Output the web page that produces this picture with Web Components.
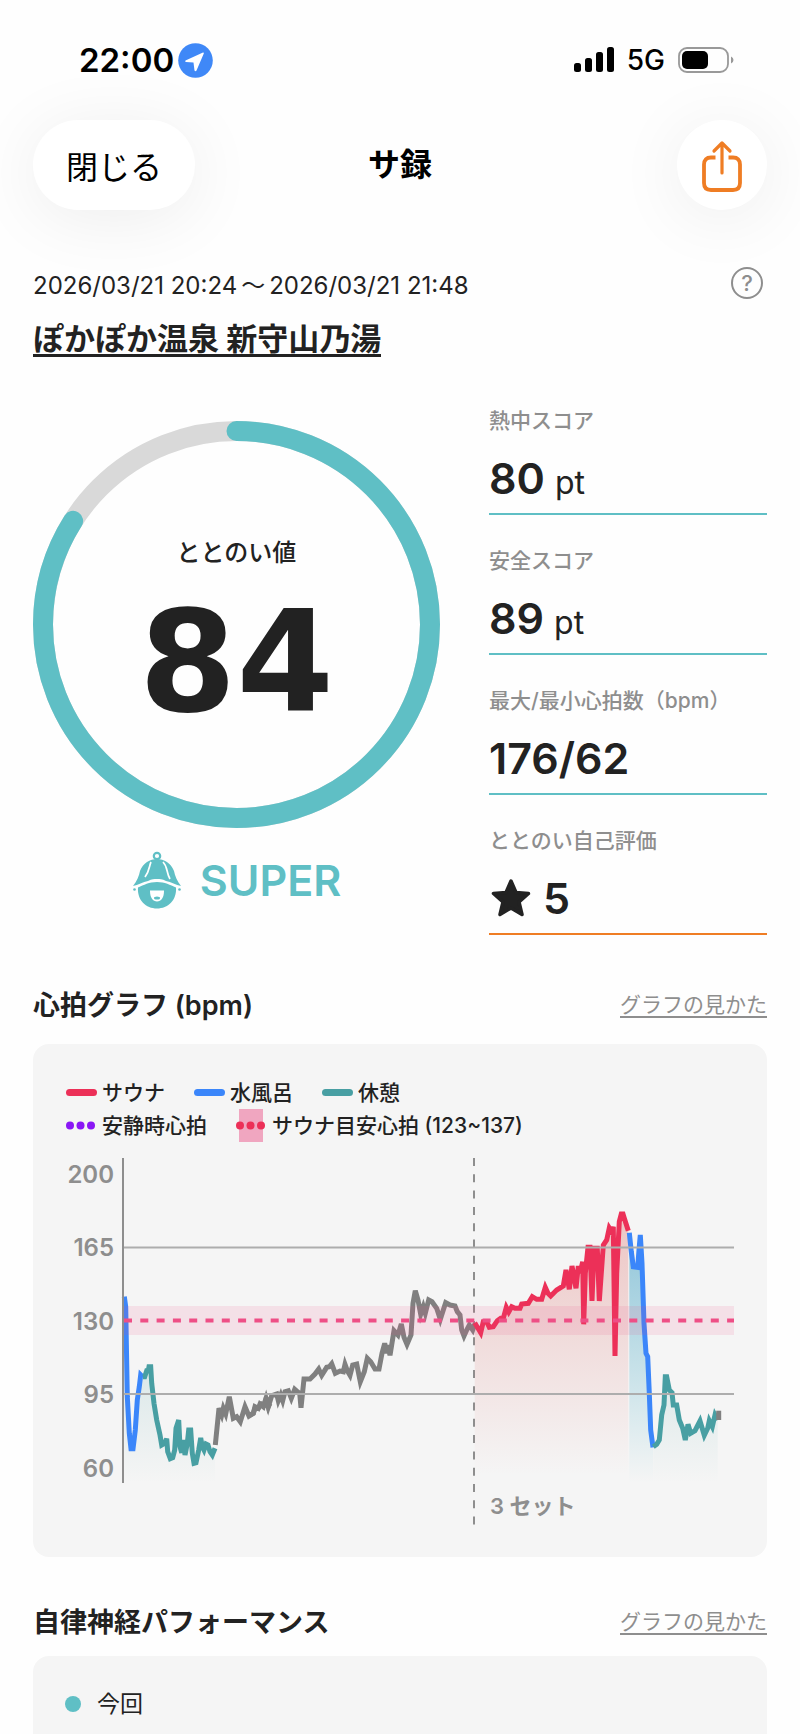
<!DOCTYPE html>
<html lang="ja">
<head>
<meta charset="utf-8">
<meta name="viewport" content="width=device-width, initial-scale=1">
<title>サ録</title>
<style>
    :root {
        --teal: #5fbfc5;
        --orange: #ef7d24;
        --ink: #222;
        --muted: #8e8e8e;
        --panel: #f5f5f5;
    }
    body {
        margin: 0;
        background: #fefefe;
        color: var(--ink);
        font-family: Inter, "Noto Sans CJK JP", sans-serif;
    }
</style>
</head>
<body>
<record-page></record-page>

<script>
class StatusBar extends HTMLElement {
    constructor() {
        super();
        this.shadow = this.attachShadow({ mode: 'open' });
    }

    connectedCallback() {
        this.shadow.innerHTML = /*html*/`
            <style>
                :host {
                    display: flex;
                    justify-content: space-between;
                    align-items: center;
                    height: 120px;
                    padding: 0 66px 0 79px;
                    color: #000;
                }
                div {
                    display: flex;
                    align-items: center;
                }
                .left { gap: 4px; }
                .right { gap: 13px; }
                .time {
                    font-size: 33px;
                    font-weight: 600;
                }
                .net {
                    font-size: 28px;
                    font-weight: 500;
                }
                svg { display: block; }
            </style>
            <div class="left">
                <span class="time">22:00</span>
                <svg width="35" height="35" viewBox="0 0 35 35">
                    <circle cx="17.500" cy="17.500" r="17.300" fill="#3f88f7"/>
                    <path d="M25 9.500 L7.500 17.500 Q6.500 18.500 8 19 L15.500 19.500 L16.500 27.500 Q17.500 29 18.500 27.500 L25.800 10.500 Q26 9.300 25 9.500Z" fill="#fff"/>
                </svg>
            </div>
            <div class="right">
                <svg width="40" height="26" viewBox="0 0 40 26">
                    <rect x="0" y="16" width="7" height="9" rx="2.500"/>
                    <rect x="11" y="11" width="7" height="14" rx="2.500"/>
                    <rect x="22" y="5" width="7" height="20" rx="2.500"/>
                    <rect x="33" y="0" width="7" height="25" rx="2.500"/>
                </svg>
                <span class="net">5G</span>
                <svg width="56" height="26" viewBox="0 0 56 26">
                    <rect x="1" y="1" width="49" height="24" rx="8" fill="none" stroke="#999" stroke-width="1.800"/>
                    <rect x="4" y="4" width="26" height="18" rx="5"/>
                    <path d="M53 9.500 Q55.500 10.500 55.500 13 Q55.500 15.500 53 16.500Z" fill="#999"/>
                </svg>
            </div>
        `;
    }
}

class NavBar extends HTMLElement {
    constructor() {
        super();
        this.shadow = this.attachShadow({ mode: 'open' });
    }

    connectedCallback() {
        this.shadow.innerHTML = /*html*/`
            <style>
                :host {
                    display: grid;
                    grid-template-columns: 1fr auto 1fr;
                    align-items: center;
                    color: #000;
                }
                button {
                    height: 90px;
                    padding: 0;
                    border: 0;
                    border-radius: 45px;
                    background: #fff;
                    color: #000;
                    font: inherit;
                    font-size: 32px;
                    box-shadow: 0 8px 70px rgba(0, 0, 0, 0.07);
                    cursor: pointer;
                }
                .close {
                    justify-self: start;
                    width: 162px;
                }
                .share {
                    display: flex;
                    align-items: center;
                    justify-content: center;
                    justify-self: end;
                    width: 90px;
                }
                h1 {
                    margin: 0;
                    font-size: 32px;
                    font-weight: 700;
                    line-height: 40px;
                }
            </style>
            <button class="close">閉じる</button>
            <h1><slot></slot></h1>
            <button class="share" aria-label="共有">
                <svg width="40" height="54" viewBox="0 -3 40 54" fill="none" stroke="#ef7d24" stroke-width="3.800" stroke-linecap="round" stroke-linejoin="round">
                    <path d="M13.500 16.500 H9 Q2 16.500 2 23.500 V42 Q2 49 9 49 H31 Q38 49 38 42 V23.500 Q38 16.500 31 16.500 H26.500" stroke-linecap="butt"/>
                    <path d="M20 32 V2 M12 10 L20 2 L28 10" stroke-width="3.200"/>
                </svg>
            </button>
        `;
    }
}

class SessionInfo extends HTMLElement {
    constructor() {
        super();
        this.shadow = this.attachShadow({ mode: 'open' });
    }

    connectedCallback() {
        this.shadow.innerHTML = /*html*/`
            <style>
                :host { display: block; }
                .row {
                    display: flex;
                    justify-content: space-between;
                    align-items: center;
                    height: 32px;
                    padding-right: 4px;
                    font-size: 24px;
                }
                button {
                    width: 32px;
                    height: 32px;
                    padding: 0;
                    border: 2px solid #8e8e8e;
                    border-radius: 50%;
                    background: none;
                    color: #8e8e8e;
                    font: inherit;
                    font-size: 22px;
                    font-weight: 500;
                    line-height: 28px;
                    cursor: pointer;
                }
                a {
                    display: block;
                    width: fit-content;
                    margin-top: 25px;
                    color: inherit;
                    font-size: 31px;
                    font-weight: 700;
                    line-height: 30px;
                    text-decoration: none;
                    border-bottom: 3px solid;
                }
            </style>
            <div class="row">
                <slot name="period"></slot>
                <button aria-label="ヘルプ">?</button>
            </div>
            <a href="#"><slot></slot></a>
        `;
    }
}

class ScoreRing extends HTMLElement {
    constructor() {
        super();
        this.shadow = this.attachShadow({ mode: 'open' });
    }

    connectedCallback() {
        const value = Number(this.getAttribute('value'));

        this.shadow.innerHTML = /*html*/`
            <style>
                :host {
                    display: block;
                    padding-top: 15px;
                }
                .ring {
                    display: grid;
                }
                .ring > * { grid-area: 1 / 1; }
                svg {
                    display: block;
                    width: 100%;
                }
                .text {
                    display: flex;
                    flex-direction: column;
                    align-items: center;
                    padding-top: 114px;
                }
                .label {
                    font-size: 24px;
                    font-weight: 500;
                    line-height: 36px;
                }
                .value {
                    margin-top: 12px;
                    font-family: "DejaVu Sans", sans-serif;
                    font-size: 140px;
                    font-weight: 700;
                    line-height: 160px;
                }
                .rank {
                    display: flex;
                    justify-content: center;
                    align-items: center;
                    gap: 18px;
                    height: 60px;
                    margin-top: 22px;
                    color: var(--teal);
                    font-size: 43px;
                    font-weight: 600;
                }
                .rank svg { width: 50px; }
            </style>
            <div class="ring">
                <svg viewBox="0 0 407 407" fill="none" stroke-width="20">
                    <circle cx="203.500" cy="203.500" r="193.500" stroke="#d9d9d9"/>
                    <circle cx="203.500" cy="203.500" r="193.500" stroke="#5fbfc5" stroke-linecap="round"
                        pathLength="100" stroke-dasharray="${value} 100" transform="rotate(-90 203.500 203.500)"/>
                </svg>
                <div class="text">
                    <span class="label">${this.getAttribute('label')}</span>
                    <span class="value">${value}</span>
                </div>
            </div>
            <div class="rank">
                <svg viewBox="0 0 50 58" fill="#5fbfc5">
                    <circle cx="25" cy="5" r="3.200" fill="none" stroke="#5fbfc5" stroke-width="2.200"/>
                    <path d="M1 35 C5 30 7 25 8 20 C11 12 18 8 25 8 C32 8 39 12 42 20 C43 25 45 30 49 35 C44 34 39 31 34 30 C30 28 28 28 25 28 C22 28 20 28 16 30 C11 31 6 34 1 35Z"/>
                    <path d="M19 11 C17 15 18 19 13 26 M31 11 C36 16 34 21 38 28" fill="none" stroke="#fff" stroke-width="1.700"/>
                    <path d="M6 36.500 C12 34 17 31 25 31 C33 31 38 34 44 36.500 C45 49 36 57.500 25 57.500 C14 57.500 5 49 6 36.500Z"/>
                    <circle cx="2.500" cy="38.500" r="1.300"/>
                    <circle cx="47.500" cy="38.500" r="1.300"/>
                    <path d="M18 39.500 H32 C32 47 29 50.500 25 50.500 C21 50.500 18 47 18 39.500Z" fill="#fff"/>
                    <ellipse cx="25" cy="47" rx="3" ry="1.500"/>
                </svg>
                <slot></slot>
            </div>
        `;
    }
}

class ScoreItem extends HTMLElement {
    constructor() {
        super();
        this.shadow = this.attachShadow({ mode: 'open' });
    }

    connectedCallback() {
        const unit = this.getAttribute('unit') || '';
        const star = this.hasAttribute('star') ? /*html*/`
            <svg width="44" height="42" viewBox="0 0 44 42">
                <path d="M22 4 L27 15.500 L39.500 16.500 L30 25 L33 37.500 L22 31 L11 37.500 L14 25 L4.500 16.500 L17 15.500Z" fill="#222" stroke="#222" stroke-width="3.500" stroke-linejoin="round"/>
            </svg>` : '';

        this.shadow.innerHTML = /*html*/`
            <style>
                :host {
                    display: block;
                    border-bottom: 2px solid var(--line, var(--teal));
                }
                .label {
                    color: var(--muted);
                    font-size: 21px;
                    font-weight: 500;
                    line-height: 30px;
                    white-space: nowrap;
                }
                .value {
                    display: flex;
                    align-items: baseline;
                    gap: 10px;
                    padding: 12px 0 5px;
                    font-size: 43px;
                    font-weight: 600;
                    line-height: 60px;
                }
                .unit {
                    font-size: 32px;
                    font-weight: 400;
                    line-height: 40px;
                }
                svg { align-self: center; }
            </style>
            <div class="label">${this.getAttribute('label')}</div>
            <div class="value">${star}<slot></slot>${unit && `<span class="unit">${unit}</span>`}</div>
        `;
    }
}

class SectionHead extends HTMLElement {
    constructor() {
        super();
        this.shadow = this.attachShadow({ mode: 'open' });
    }

    connectedCallback() {
        this.shadow.innerHTML = /*html*/`
            <style>
                :host {
                    display: flex;
                    justify-content: space-between;
                    align-items: center;
                    height: 40px;
                }
                h2 {
                    margin: 0;
                    font-size: 27px;
                    font-weight: 600;
                    line-height: 40px;
                }
                a {
                    color: var(--muted);
                    font-size: 21px;
                    line-height: 22px;
                    text-decoration: none;
                    border-bottom: 2px solid;
                }
            </style>
            <h2><slot></slot></h2>
            <a href="#">グラフの見かた</a>
        `;
    }
}

class ChartLegend extends HTMLElement {
    constructor() {
        super();
        this.shadow = this.attachShadow({ mode: 'open' });
    }

    dots(color, band) {
        const back = band ? '<rect x="3" y="0" width="24" height="33" fill="#f0a6c0"/>' : '';
        return /*html*/`
            <svg width="31" height="33" viewBox="0 0 31 33">${back}
                <g fill="${color}">
                    <circle cx="4" cy="16.500" r="4"/>
                    <circle cx="14.500" cy="16.500" r="4"/>
                    <circle cx="25" cy="16.500" r="4"/>
                </g>
            </svg>`;
    }

    bar(color) {
        return /*html*/`
            <svg width="31" height="33" viewBox="0 0 31 33">
                <rect y="13" width="31" height="7" rx="3.500" fill="${color}"/>
            </svg>`;
    }

    connectedCallback() {
        this.shadow.innerHTML = /*html*/`
            <style>
                :host {
                    display: block;
                    padding: 0 33px;
                    font-size: 21px;
                    font-weight: 500;
                    line-height: 30px;
                }
                div {
                    display: flex;
                    gap: 29px;
                }
                span {
                    display: flex;
                    align-items: center;
                    gap: 5px;
                    height: 33px;
                    white-space: nowrap;
                }
            </style>
            <div>
                <span>${this.bar('#ec3058')}サウナ</span>
                <span>${this.bar('#3b86fa')}水風呂</span>
                <span>${this.bar('#489fa3')}休憩</span>
            </div>
            <div>
                <span>${this.dots('#8a17f5')}安静時心拍</span>
                <span>${this.dots('#ec3058', true)}サウナ目安心拍 (123~137)</span>
            </div>
        `;
    }
}

// Points are in thirds of a pixel, counted from the origin of their segment
const SEGMENTS = [
    { color: '#3b86fa', fill: 'rest', x: 17, y: 0, points: '223,440 227,470 232,740 238,850 243,896 249,896 256,840 262,750 268,710 272,675 279,682' },
    { color: '#489fa3', fill: 'rest', x: 17, y: 0, points: '279,680 284,680 290,662 295,662 297,650 302,650 305,700 312,760 320,810 330,855 335,885 344,880 350,866 353,905 361,926 368,923 374,900 378,835 386,810 390,890 395,908 400,870 405,915 412,880 416,840 422,840 427,910 432,940 438,938 446,900 452,864 457,890 462,900 468,882 474,885 480,905 487,915 495,895' },
    { color: '#808080', x: 17, y: 0, points: '496,885 507,775 515,795 520,775 527,792 538,740 550,805 560,800 571,815 585,770 597,798 610,790 616,772 625,775 635,762 645,765 649,743 655,770 660,760' },
    { color: '#808080', x: 217, y: 100, points: '0,495 10,490 15,470 25,475 30,462 40,470 48,445 55,470 65,437 80,432 85,452 92,435 98,452 105,425 115,422 124,445 134,418 142,425 149,430 153,473 162,387 180,387 195,372 206,357 215,376 230,352 238,350 245,341 256,370 270,363 280,365 285,343 292,362 300,376 308,345 320,342 331,395 343,365 352,325 362,335 375,357 387,357 396,310 404,280 410,310 413,285 420,316 432,242 444,255 454,222 462,262 471,283 483,255 489,160 496,122 504,150 512,193 520,170 526,190 536,150 546,155 560,175 571,208 580,180 587,158 600,165 615,168 622,185 630,195 635,240 642,258 650,240 658,225 668,240 674,222' },
    { color: '#ec3058', fill: 'sauna', x: 427, y: 40, points: '44,398 62,428 70,395 80,395 88,412 100,410 112,392 122,385 130,385 139,352 146,366 155,350 165,355 180,355 185,342 205,340 217,320 230,328 245,328 256,292 264,310 272,318 290,300 310,288 318,240 328,298 336,228 348,295 355,228 360,250 368,215 371,403 376,250 384,172 390,172 396,333 402,175 412,175 418,333 430,165 440,150 448,114 455,125 460,110 465,498 470,250 478,95 484,72 489,72 493,85 505,122' },
    { color: '#3b86fa', fill: 'water', x: 427, y: 40, points: '508,128 514,185 520,230 533,232 537,180 541,135 546,220 552,400 558,490 563,500 568,610 572,720 579,772' },
    { color: '#489fa3', fill: 'rest', x: 427, y: 40, points: '580,770 590,763 598,750 605,675 612,645 616,560 620,560 628,600 636,608 640,645 650,645 658,690 668,715 676,750 684,703 692,730 705,722 720,693 733,736 743,715 748,692 757,710 765,675 773,690' },
    { color: '#808080', x: 427, y: 40, points: '776,662 776,690' }
];

class HeartChart extends HTMLElement {
    constructor() {
        super();
        this.shadow = this.attachShadow({ mode: 'open' });
    }

    segment({ color, fill, x, y, points }) {
        const list = points.split(' ').map(p => {
            const [px, py] = p.split(',').map(Number);
            return [(px / 3 + x).toFixed(1), (py / 3 + y).toFixed(1)];
        });
        const line = list.map(p => p.join(',')).join(' ');
        const area = fill
            ? `<polygon points="${list[0][0]},333 ${line} ${list[list.length - 1][0]},333" fill="url(#${fill})"/>`
            : '';
        return `${area}<polyline points="${line}" fill="none" stroke="${color}" stroke-width="5"/>`;
    }

    connectedCallback() {
        const ticks = [200, 165, 130, 95, 60].map((n, i) =>
            `<text x="81" y="${Math.round(33 + i * 73.4)}" text-anchor="end">${n}</text>`).join('');

        this.shadow.innerHTML = /*html*/`
            <style>
                :host {
                    display: block;
                    margin-top: 8px;
                }
                svg {
                    display: block;
                    width: 100%;
                }
                text {
                    fill: var(--muted);
                    font-size: 24px;
                    font-weight: 600;
                }
                .set { font-size: 22px; }
            </style>
            <svg viewBox="0 0 734 390">
                <defs>
                    <linearGradient id="sauna" gradientUnits="userSpaceOnUse" x1="0" y1="60" x2="0" y2="325">
                        <stop offset="0" stop-color="#d9534f" stop-opacity="0.300"/>
                        <stop offset="1" stop-color="#d9534f" stop-opacity="0"/>
                    </linearGradient>
                    <linearGradient id="water" gradientUnits="userSpaceOnUse" x1="0" y1="80" x2="0" y2="333">
                        <stop offset="0" stop-color="#4ba3c7" stop-opacity="0.600"/>
                        <stop offset="1" stop-color="#4bb3c7" stop-opacity="0"/>
                    </linearGradient>
                    <linearGradient id="rest" gradientUnits="userSpaceOnUse" x1="0" y1="210" x2="0" y2="333">
                        <stop offset="0" stop-color="#489fa3" stop-opacity="0.160"/>
                        <stop offset="1" stop-color="#489fa3" stop-opacity="0"/>
                    </linearGradient>
                </defs>
                ${ticks}
                <path d="M441 8 V375" stroke="#8e8e8e" stroke-width="2" stroke-dasharray="8 8.300"/>
                ${SEGMENTS.map(s => this.segment(s)).join('')}
                <path d="M91 97.500 H701 M91 244 H701" stroke="#adadad" stroke-width="2"/>
                <rect x="91" y="156" width="610" height="29" fill="#f04a86" fill-opacity="0.120"/>
                <path d="M91 170.500 H701" stroke="#ee4f86" stroke-width="4" stroke-dasharray="8 8.300"/>
                <path d="M90 8 V333" stroke="#8e8e8e" stroke-width="2"/>
                <text class="set" x="457" y="364">3 セット</text>
            </svg>
        `;
    }
}

class PanelCard extends HTMLElement {
    constructor() {
        super();
        this.shadow = this.attachShadow({ mode: 'open' });
    }

    connectedCallback() {
        this.shadow.innerHTML = /*html*/`
            <style>
                :host {
                    display: block;
                    padding: 32px 0 17px;
                    border-radius: 16px;
                    background: var(--panel);
                }
            </style>
            <slot></slot>
        `;
    }
}

class RecordPage extends HTMLElement {
    constructor() {
        super();
        this.shadow = this.attachShadow({ mode: 'open' });
    }

    connectedCallback() {
        this.shadow.innerHTML = /*html*/`
            <style>
                :host {
                    display: flex;
                    flex-direction: column;
                    min-height: 100vh;
                }
                main {
                    display: flex;
                    flex-direction: column;
                    flex: 1;
                    padding: 0 33px;
                }
                session-info { margin-top: 57px; }
                .to { margin: 0 4px; }
                .overview {
                    display: grid;
                    grid-template-columns: 407fr 278fr;
                    gap: 49px;
                    margin-top: 49px;
                }
                .scores {
                    display: flex;
                    flex-direction: column;
                    gap: 31px;
                }
                .self { --line: var(--orange); }
                section {
                    margin-top: 51px;
                }
                section panel-card { margin-top: 18px; }
                .nerve {
                    display: flex;
                    flex-direction: column;
                    flex: 1;
                    margin-top: 46px;
                }
                .nerve panel-card {
                    flex: 1;
                    margin-top: 13px;
                    padding-bottom: 0;
                    border-radius: 16px 16px 0 0;
                }
                .now {
                    display: flex;
                    align-items: center;
                    gap: 16px;
                    padding: 0 32px;
                    font-size: 23px;
                    line-height: 32px;
                }
                .now::before {
                    content: "";
                    width: 16px;
                    height: 16px;
                    border-radius: 50%;
                    background: var(--teal);
                }
            </style>
            <status-bar></status-bar>
            <main>
                <nav-bar>サ録</nav-bar>
                <session-info>
                    <span slot="period">2026/03/21 20:24<span class="to">〜</span>2026/03/21 21:48</span>
                    ぽかぽか温泉 新守山乃湯
                </session-info>
                <div class="overview">
                    <score-ring label="ととのい値" value="84">SUPER</score-ring>
                    <div class="scores">
                        <score-item label="熱中スコア" unit="pt">80</score-item>
                        <score-item label="安全スコア" unit="pt">89</score-item>
                        <score-item label="最大/最小心拍数（bpm）">176/62</score-item>
                        <score-item class="self" label="ととのい自己評価" star>5</score-item>
                    </div>
                </div>
                <section>
                    <section-head>心拍グラフ (bpm)</section-head>
                    <panel-card>
                        <chart-legend></chart-legend>
                        <heart-chart></heart-chart>
                    </panel-card>
                </section>
                <section class="nerve">
                    <section-head>自律神経パフォーマンス</section-head>
                    <panel-card>
                        <div class="now">今回</div>
                    </panel-card>
                </section>
            </main>
        `;
    }
}

customElements.define('status-bar', StatusBar);
customElements.define('nav-bar', NavBar);
customElements.define('session-info', SessionInfo);
customElements.define('score-ring', ScoreRing);
customElements.define('score-item', ScoreItem);
customElements.define('section-head', SectionHead);
customElements.define('chart-legend', ChartLegend);
customElements.define('heart-chart', HeartChart);
customElements.define('panel-card', PanelCard);
customElements.define('record-page', RecordPage);
</script>
</body>
</html>
